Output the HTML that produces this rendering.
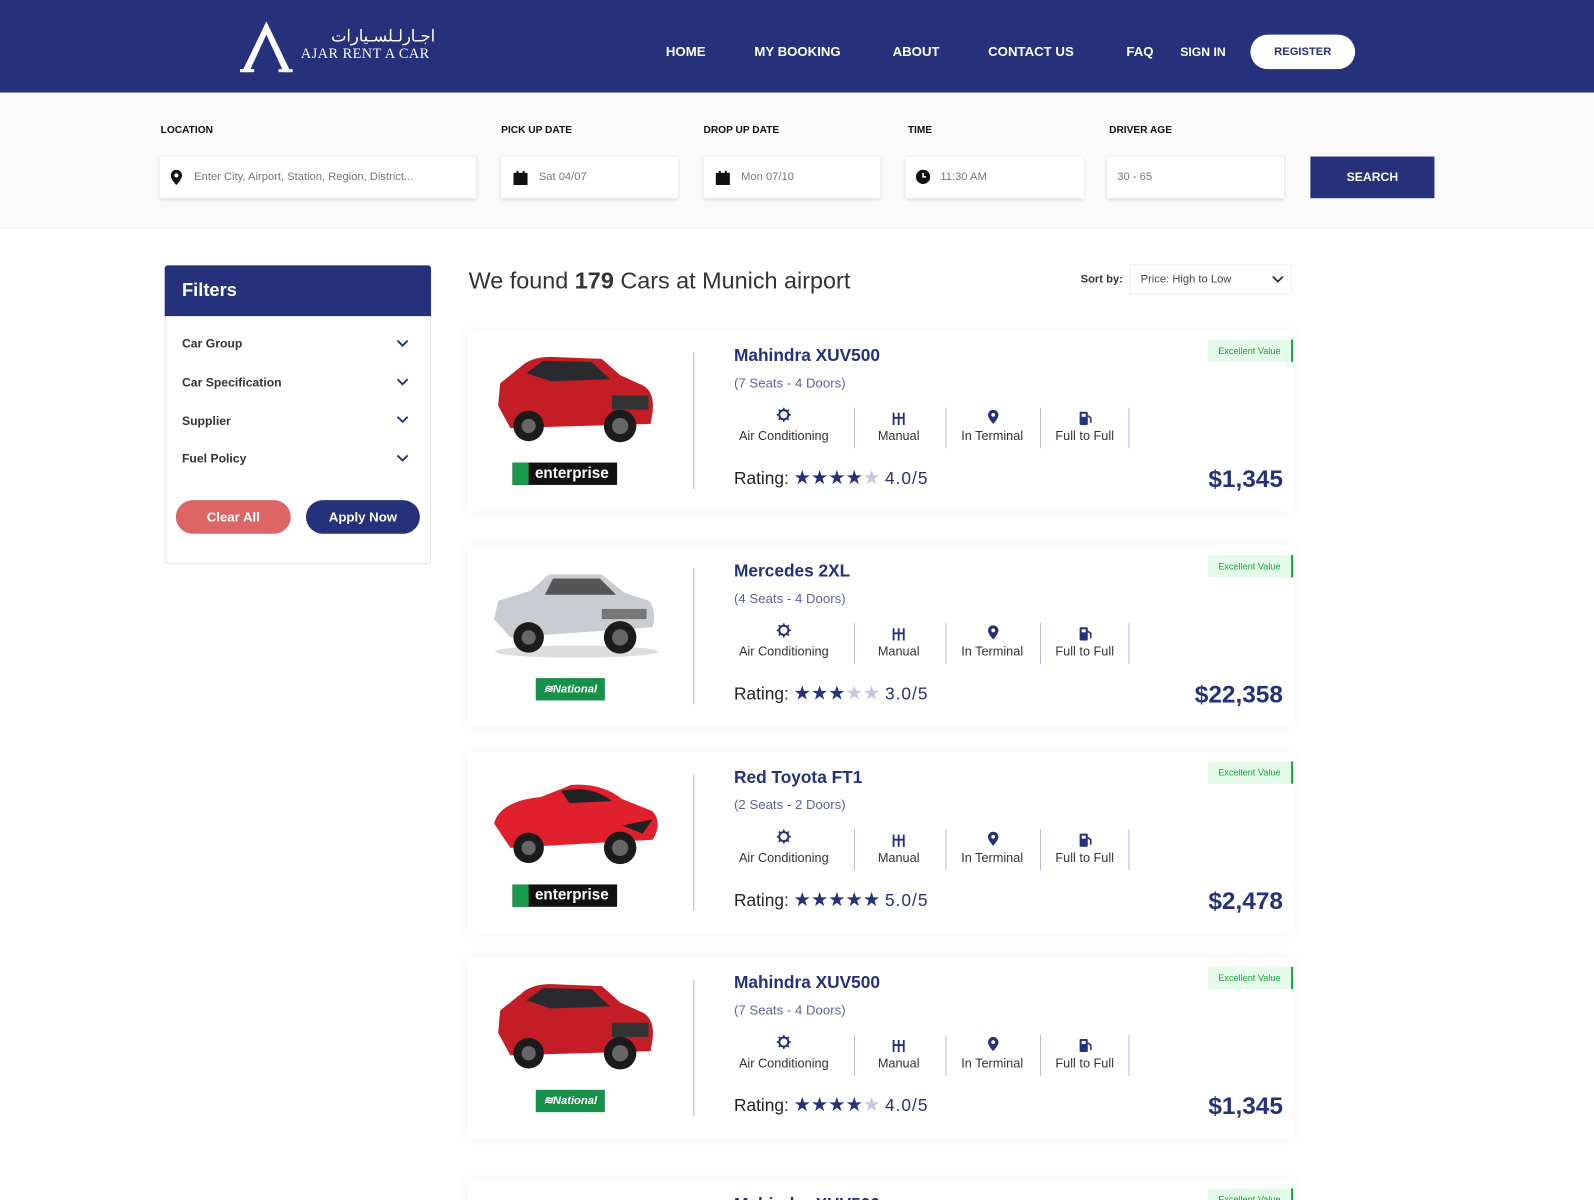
<!DOCTYPE html>
<html><head><meta charset="utf-8"><style>
*{margin:0;padding:0;box-sizing:border-box}
html{width:1594px;height:1200px;overflow:hidden}
body{width:1594px;height:1200px;overflow:hidden;background:#fff;font-family:"Liberation Sans",sans-serif;color:#222;position:relative}
#w{position:absolute;left:0;top:0;width:1568px;height:1181px;overflow:hidden;transform:scale(1.0166);transform-origin:0 0}
.a{position:absolute}
.hdr{left:0;top:0;width:1568px;height:91px;background:#25317a}
.nav{color:#fff;font-weight:bold;font-size:13px;top:43px}
.reg{left:1230px;top:34px;width:103px;height:34px;background:#fff;border-radius:17px;color:#25317a;font-size:11px;font-weight:bold;text-align:center;line-height:34px}
.sb{left:0;top:91px;width:1568px;height:134px;background:#fafafa;border-bottom:1px solid #eee}
.lbl{top:123px;font-size:10px;font-weight:bold;color:#111}
.inp{top:154px;height:41px;background:#fff;box-shadow:0 1px 4px rgba(0,0,0,.15);font-size:11px;color:#777;line-height:41px}
.btn{left:1289px;top:154px;width:122px;height:41px;background:#25317a;color:#fff;font-weight:bold;font-size:12px;text-align:center;line-height:41px}
.fp{left:162px;top:261px;width:262px;height:294px;border:1px solid #e3e3e3;border-radius:3px;background:#fff}
.fh{left:162px;top:261px;width:262px;height:50px;background:#25317a;border-radius:3px 3px 0 0;color:#fff;font-weight:bold;font-size:18px;padding:14px 17px}
.fi{left:179px;font-size:12px;font-weight:bold;color:#333}
.chev{left:390px;width:12px;height:8px}
.pill{top:492px;height:33px;border-radius:17px;color:#fff;font-weight:bold;font-size:13px;text-align:center;line-height:33px}
.card{left:460px;width:812px;height:178px;background:#fff;box-shadow:0 0 12px rgba(0,0,0,.06)}
.div{left:222px;top:22px;width:1px;height:134px;background:#b5bad4}
.ttl{left:262px;top:15px;font-size:17px;font-weight:bold;color:#25317a}
.sub{left:262px;top:44px;font-size:13px;color:#5a63a0}
.fl{top:97px;font-size:12.5px;color:#333;text-align:center;width:120px}
.sep{top:76px;width:1px;height:40px;background:#b5bad4}
.ic{top:76px;width:14px;height:14px}
.rat{left:262px;top:134px;font-size:17px;color:#222;white-space:nowrap}
.rat b{color:#25317a;font-weight:normal;letter-spacing:1px}
.st{color:#25317a;font-size:19px}
.st i{font-style:normal;color:#c5c8dc}
.pr{right:10px;top:133px;font-size:24px;font-weight:bold;color:#25317a}
.bdg{right:0;top:9px;height:22px;width:84px;background:#e5fbe9;border-right:2px solid #18a33c;color:#18a33c;font-size:9px;text-align:center;line-height:22px}
.ent{left:44px;top:130px;width:103px;height:22px;background:#111;color:#fff;font-weight:bold;font-size:15px;line-height:22px;padding-left:14px;overflow:hidden;text-align:center}
.ent:before{content:"";position:absolute;left:0;top:0;width:16px;height:22px;background:#1a9b4b}
.nat{left:67px;top:130px;width:68px;height:22px;background:#17914a;color:#fff;font-weight:bold;font-style:italic;font-size:11px;line-height:22px;text-align:center}
</style></head><body><div id="w">
<div class="a hdr"></div>
<svg class="a" style="left:236px;top:20px" width="52" height="52" viewBox="0 0 52 52"><path d="M26 1 L2 51 L9 51 L26 14 L43 51 L50 51 Z" fill="#fff"/><rect x="0" y="48" width="14" height="3" fill="#fff"/><rect x="38" y="48" width="14" height="3" fill="#fff"/></svg>
<div class="a" style="left:296px;top:26px;color:#fff;font-size:16px;font-family:'Liberation Serif','Noto Sans CJK SC',serif;width:132px;text-align:right">اجـارلـلسـيارات</div>
<div class="a" style="left:296px;top:46px;color:#fff;font-size:14px;font-family:'Liberation Serif',serif;letter-spacing:.5px">AJAR RENT A CAR</div>
<div class="a nav" style="left:655px">HOME</div>
<div class="a nav" style="left:742px">MY BOOKING</div>
<div class="a nav" style="left:878px">ABOUT</div>
<div class="a nav" style="left:972px">CONTACT US</div>
<div class="a nav" style="left:1108px">FAQ</div>
<div class="a nav" style="left:1161px;font-size:12px;top:44px">SIGN IN</div>
<div class="a reg">REGISTER</div>

<div class="a sb"></div>
<div class="a lbl" style="left:158px">LOCATION</div>
<div class="a lbl" style="left:493px">PICK UP DATE</div>
<div class="a lbl" style="left:692px">DROP UP DATE</div>
<div class="a lbl" style="left:893px">TIME</div>
<div class="a lbl" style="left:1091px">DRIVER AGE</div>
<div class="a inp" style="left:157px;width:311px;padding-left:34px">Enter City, Airport, Station, Region, District...</div>
<svg class="a" style="left:168px;top:167px" width="11" height="15" viewBox="0 0 11 15"><path d="M5.5 0A5.5 5.5 0 0 0 0 5.5C0 9.5 5.5 15 5.5 15S11 9.5 11 5.5A5.5 5.5 0 0 0 5.5 0Z" fill="#111"/><circle cx="5.5" cy="5.5" r="2" fill="#fff"/></svg>
<div class="a inp" style="left:493px;width:174px;padding-left:37px">Sat 04/07</div>
<div class="a inp" style="left:692px;width:174px;padding-left:37px">Mon 07/10</div>
<svg class="a" style="left:505px;top:168px" width="14" height="14"><rect y="2" width="14" height="12" fill="#111"/><rect x="3" y="0" width="2" height="4" fill="#111"/><rect x="9" y="0" width="2" height="4" fill="#111"/></svg>
<svg class="a" style="left:704px;top:168px" width="14" height="14"><rect y="2" width="14" height="12" fill="#111"/><rect x="3" y="0" width="2" height="4" fill="#111"/><rect x="9" y="0" width="2" height="4" fill="#111"/></svg>
<div class="a inp" style="left:891px;width:175px;padding-left:34px">11:30 AM</div>
<svg class="a" style="left:901px;top:167px" width="14" height="14"><circle cx="7" cy="7" r="7" fill="#111"/><path d="M7 3V7H10" stroke="#fff" stroke-width="1.5" fill="none"/></svg>
<div class="a inp" style="left:1089px;width:174px;padding-left:10px">30 - 65</div>
<div class="a btn">SEARCH</div>

<div class="a fp"></div>
<div class="a fh">Filters</div>
<div class="a fi" style="top:331px">Car Group</div>
<div class="a fi" style="top:369px">Car Specification</div>
<div class="a fi" style="top:407px">Supplier</div>
<div class="a fi" style="top:444px">Fuel Policy</div>
<svg class="a chev" style="top:334px" viewBox="0 0 12 8"><path d="M1 1L6 6L11 1" stroke="#25317a" stroke-width="1.8" fill="none"/></svg>
<svg class="a chev" style="top:372px" viewBox="0 0 12 8"><path d="M1 1L6 6L11 1" stroke="#25317a" stroke-width="1.8" fill="none"/></svg>
<svg class="a chev" style="top:409px" viewBox="0 0 12 8"><path d="M1 1L6 6L11 1" stroke="#25317a" stroke-width="1.8" fill="none"/></svg>
<svg class="a chev" style="top:447px" viewBox="0 0 12 8"><path d="M1 1L6 6L11 1" stroke="#25317a" stroke-width="1.8" fill="none"/></svg>
<div class="a pill" style="left:173px;width:113px;background:#dd6565">Clear All</div>
<div class="a pill" style="left:301px;width:112px;background:#25317a">Apply Now</div>

<div class="a" style="left:461px;top:263px;font-size:23px;color:#333">We found <b>179</b> Cars at Munich airport</div>
<div class="a" style="left:1063px;top:269px;font-size:11px;font-weight:bold;color:#333">Sort by:</div>
<div class="a" style="left:1111px;top:260px;width:160px;height:30px;border:1px solid #eee;background:#fff;font-size:11px;color:#444;line-height:29px;padding-left:10px">Price: High to Low</div>
<svg class="a" style="left:1251px;top:271px" width="12" height="8"><path d="M1 1L6 6L11 1" stroke="#222" stroke-width="1.6" fill="none"/></svg>

<div id="cards"></div>
<script>
const data=[
 [325,'Mahindra XUV500','(7 Seats - 4 Doors)',4,'4.0/5','$1,345','ent','#c51d25','suv'],
 [537,'Mercedes 2XL','(4 Seats - 4 Doors)',3,'3.0/5','$22,358','nat','#c9ccd0','sedan'],
 [740,'Red Toyota FT1','(2 Seats - 2 Doors)',5,'5.0/5','$2,478','ent','#e0202c','sport'],
 [942,'Mahindra XUV500','(7 Seats - 4 Doors)',4,'4.0/5','$1,345','nat','#c51d25','suv'],
 [1160,'Mahindra XUV500','(7 Seats - 4 Doors)',4,'4.0/5','$1,345','ent','#c51d25','suv']];
const feats=[['Air Conditioning',311],['Manual',424],['In Terminal',516],['Full to Full',607]];
const seps=[380,470,563,650];
let h='';
for(const d of data){
 const [y,t,s,n,r,p,lg,col,kind]=d;
 let stars='';for(let i=0;i<5;i++)stars+=i<n?'★':'<i>★</i>';
 let body;
 if(kind==='suv')body=`<path d="M8 60 L10 38 L30 22 Q40 12 60 12 L110 14 L128 30 L150 40 Q162 46 160 66 L158 78 L20 82 Z" fill="${col}"/><path d="M36 28 L52 16 L100 17 L118 34 L60 36 Z" fill="#2a2a2e"/><rect x="120" y="50" width="36" height="14" fill="#333"/>`;
 else if(kind==='sedan')body=`<path d="M4 62 L8 44 L40 34 L58 18 L110 18 L132 36 L156 44 Q164 52 160 70 L20 80 Z" fill="${col}"/><path d="M62 22 L108 22 L124 38 L54 38 Z" fill="#555"/><rect x="110" y="52" width="44" height="10" fill="#777"/><ellipse cx="85" cy="94" rx="80" ry="6" fill="#ddd"/>`;
 else body=`<path d="M4 56 Q10 34 50 30 L80 18 Q110 16 130 32 L160 44 Q170 56 160 72 L20 80 Z" fill="${col}"/><path d="M70 24 Q100 18 120 34 L78 36 Z" fill="#222"/><path d="M130 58 L160 52 L150 66 Z" fill="#222"/>`;
 const car=`<svg class="a" style="left:22px;top:${kind==='sedan'?10:14}px" width="170" height="100" viewBox="0 0 170 100">${body}<circle cx="38" cy="80" r="15" fill="#1b1b1b"/><circle cx="38" cy="80" r="7" fill="#666"/><circle cx="128" cy="80" r="16" fill="#1b1b1b"/><circle cx="128" cy="80" r="8" fill="#666"/></svg>`;
 const logo=lg==='ent'?`<div class="a ent">enterprise</div>`:`<div class="a nat">≋National</div>`;
 let f='';
 for(const [nm,cx] of feats)f+=`<div class="a fl" style="left:${cx-60}px">${nm}</div>`;
 f+=`<svg class="a ic" style="left:304px" viewBox="0 0 14 14"><circle cx="7" cy="7" r="4.5" stroke="#25317a" stroke-width="2" fill="none"/><path d="M7 0V3M7 11V14M0 7H3M11 7H14M2 2L4 4M10 10L12 12M12 2L10 4M4 10L2 12" stroke="#25317a" stroke-width="1.6"/></svg>`;
 f+=`<svg class="a ic" style="left:417px;top:80px" viewBox="0 0 14 14"><path d="M2 1V13M7 1V13M12 1V13M2 6H12" stroke="#25317a" stroke-width="1.8"/></svg>`;
 f+=`<svg class="a ic" style="left:510px;top:78px" width="11" viewBox="0 0 11 15"><path d="M5.5 0A5.5 5.5 0 0 0 0 5.5C0 9.5 5.5 15 5.5 15S11 9.5 11 5.5A5.5 5.5 0 0 0 5.5 0Z" fill="#25317a"/><circle cx="5.5" cy="5.5" r="2" fill="#fff"/></svg>`;
 f+=`<svg class="a ic" style="left:601px;top:79px" viewBox="0 0 14 14"><rect x="1" y="1" width="8" height="13" rx="1" fill="#25317a"/><rect x="3" y="3" width="4" height="3" fill="#fff"/><path d="M9 5L12 7V12" stroke="#25317a" stroke-width="1.5" fill="none"/></svg>`;
 for(const x of seps)f+=`<div class="a sep" style="left:${x}px"></div>`;
 h+=`<div class="a card" style="top:${y}px">${car}${logo}<div class="a div"></div><div class="a ttl">${t}</div><div class="a sub">${s}</div>${f}<div class="a rat">Rating: <span class="st">${stars}</span> <b>${r}</b></div><div class="a pr">${p}</div><div class="a bdg">Excellent Value</div></div>`;
}
document.getElementById('cards').outerHTML=h;
</script>
</div></body></html>
